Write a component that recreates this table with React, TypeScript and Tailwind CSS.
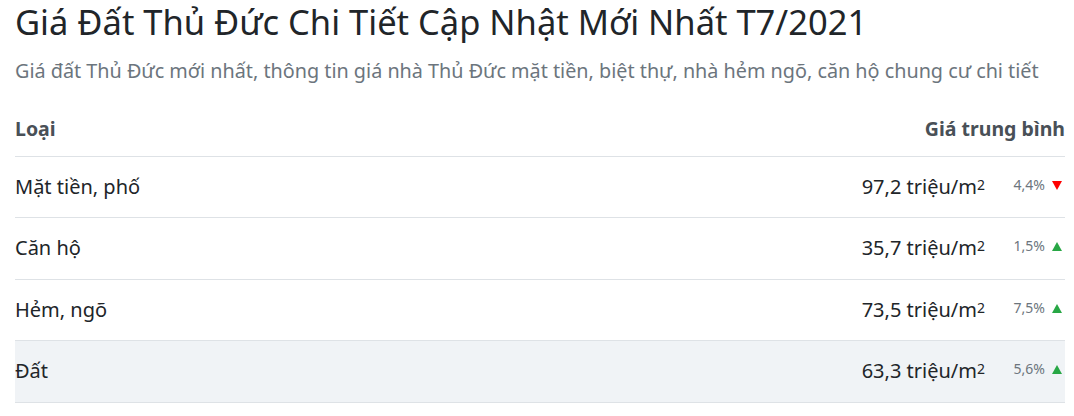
import React from "react";

const rows = [
  { name: "Mặt tiền, phố", price: "97,2", pct: "4,4%", up: false },
  { name: "Căn hộ", price: "35,7", pct: "1,5%", up: true },
  { name: "Hẻm, ngõ", price: "73,5", pct: "7,5%", up: true },
  { name: "Đất", price: "63,3", pct: "5,6%", up: true, hl: true },
];

function Tri({ up }: { up: boolean }) {
  return (
    <svg width="10" height="9" viewBox="0 0 10 9" className="inline-block ml-[7px] align-baseline">
      {up ? (
        <polygon points="5,0 10,9 0,9" fill="#28a745" />
      ) : (
        <polygon points="0,0 10,0 5,9" fill="#ff0000" />
      )}
    </svg>
  );
}

export default function App() {
  return (
    <div
      className="w-[1074px] h-[416px] bg-white pl-[15px] pr-[9px] overflow-hidden"
      style={{ fontFamily: '"Noto Sans", "Open Sans", sans-serif' }}
    >
      <h1 className="text-[34.5px] leading-[44px] text-[#212529] font-normal whitespace-nowrap">
        Giá Đất Thủ Đức Chi Tiết Cập Nhật Mới Nhất T7/2021
      </h1>
      <p className="text-[19.8px] leading-[26px] mt-[14px] text-[#6c757d] whitespace-nowrap">
        Giá đất Thủ Đức mới nhất, thông tin giá nhà Thủ Đức mặt tiền, biệt thự, nhà hẻm ngõ, căn hộ chung cư chi tiết
      </p>
      <table className="w-full mt-[17px] border-collapse">
        <thead>
          <tr className="border-b border-[#dee2e6] h-[55px]">
            <th className="text-left text-[19.5px] font-bold text-[#495057] align-middle">Loại</th>
            <th colSpan={2} className="text-right text-[19.5px] font-bold text-[#495057] align-middle">
              Giá trung bình
            </th>
          </tr>
        </thead>
        <tbody>
          {rows.map((r) => (
            <tr
              key={r.name}
              className={`border-b border-[#dee2e6] h-[61.5px] ${r.hl ? "bg-[#f0f3f6]" : ""}`}
            >
              <td className="text-[20px] text-[#212529] align-middle">{r.name}</td>
              <td className="text-right text-[20px] text-[#212529] align-middle whitespace-nowrap">
                {r.price} triệu/m<sup className="text-[14px] relative top-[-4px]">2</sup>
              </td>
              <td className="w-[80px] align-top pt-[15px] text-right whitespace-nowrap pr-[3px]">
                <span className="text-[14px] text-[#6c757d]">{r.pct}</span>
                <Tri up={r.up} />
              </td>
            </tr>
          ))}
        </tbody>
      </table>
    </div>
  );
}
